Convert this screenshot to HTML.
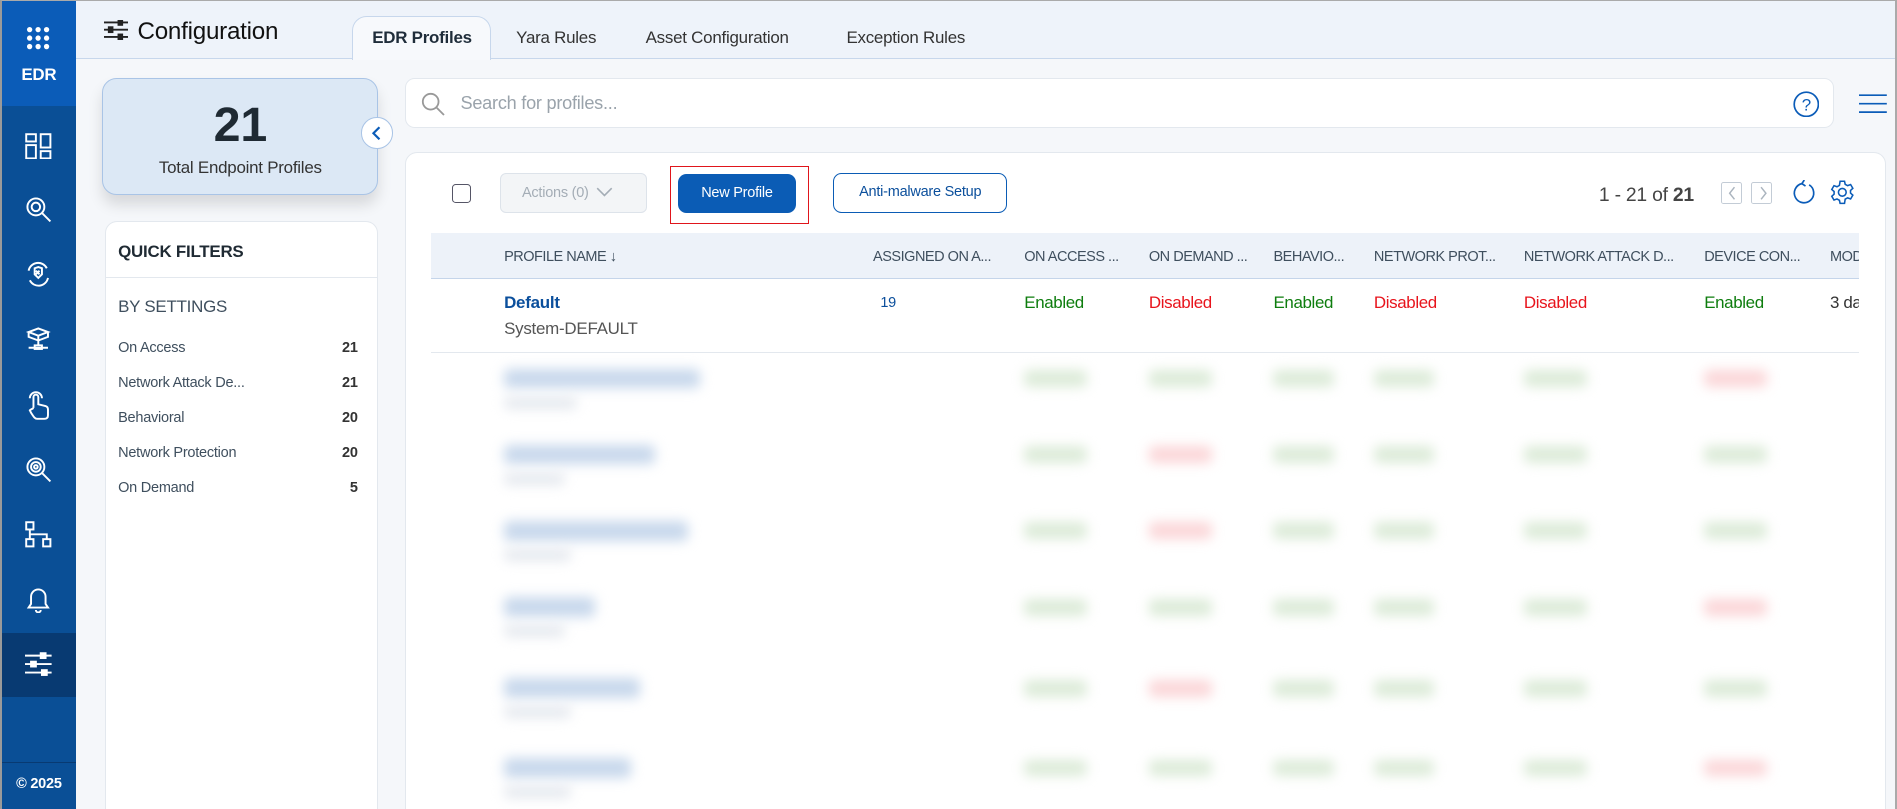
<!DOCTYPE html>
<html><head><meta charset="utf-8"><style>
*{box-sizing:border-box;margin:0;padding:0}
html,body{width:1897px;height:809px;overflow:hidden;background:#f5f7fa}
body{font-family:"Liberation Sans",sans-serif;letter-spacing:-0.2px}
#w{zoom:1.2098;width:1568px;height:669px;position:relative;overflow:hidden;background:#f5f7fa;border-left:2px solid #9a9a9a;border-top:1px solid #aaa;border-right:2px solid #aaa}
.a{position:absolute}
.side{left:0;top:0;width:61px;height:669px;background:#0a4f96}
.side svg{position:absolute;left:19px}
.t{color:#222;font-size:14px}
.blob{position:absolute;filter:blur(5px);border-radius:4px}
.hd{position:absolute;top:205px;font-size:12px;color:#3f4f5e;white-space:nowrap;letter-spacing:-0.4px}
.v{position:absolute;top:241px;font-size:14px;letter-spacing:-0.3px}
.g{color:#0e7d0e}.r{color:#e8141c}
.fi{position:absolute;left:11px;font-size:12px;color:#3f4f5e;width:198px}
.fi b{position:absolute;right:0;color:#333}
</style></head><body><div id="w">
<div class="a side">
 <div class="a" style="left:0;top:0;width:61px;height:87px;background:#0b5cb8"></div>
 <svg style="top:21px;left:20px" width="20" height="20" viewBox="0 0 20 20" fill="#fff"><circle cx="3" cy="3" r="2.2"/><circle cx="10" cy="3" r="2.2"/><circle cx="17" cy="3" r="2.2"/><circle cx="3" cy="10" r="2.2"/><circle cx="10" cy="10" r="2.2"/><circle cx="17" cy="10" r="2.2"/><circle cx="3" cy="17" r="2.2"/><circle cx="10" cy="17" r="2.2"/><circle cx="17" cy="17" r="2.2"/></svg>
 <div class="a" style="top:53px;width:61px;text-align:center;color:#fff;font-weight:bold;font-size:14px">EDR</div>
 <svg style="top:109px" width="22" height="22" viewBox="0 0 22 22" fill="none" stroke="#fff" stroke-width="1.6"><rect x="1" y="1" width="8" height="6"/><rect x="1" y="10" width="8" height="11"/><rect x="13" y="1" width="8" height="11"/><rect x="13" y="15" width="8" height="6"/></svg>
 <svg style="top:161px" width="22" height="22" viewBox="0 0 22 22" fill="none" stroke="#fff" stroke-width="1.6"><circle cx="9" cy="9" r="7"/><circle cx="9" cy="9" r="3.5"/><path d="M14 14l7 7"/></svg>
 <svg style="top:215px" width="22" height="22" viewBox="0 0 22 22" fill="none" stroke="#fff" stroke-width="1.6"><path d="M3 8a8 8 0 0 1 15-2M19 14a8 8 0 0 1-15 2"/><path d="M8 6l3-1 3 1v5l-3 3-3-3z"/><path d="M9 8l3 3M12 8l-3 3"/></svg>
 <svg style="top:269px" width="22" height="22" viewBox="0 0 22 22" fill="none" stroke="#fff" stroke-width="1.6"><path d="M11 2l8 3-8 3-8-3z M3 5v4l8 3 8-3V5M11 8v4M11 12v4M3 18h16"/><rect x="8" y="16" width="6" height="3"/></svg>
 <svg style="top:322px" width="22" height="24" viewBox="0 0 22 24" fill="none" stroke="#fff" stroke-width="1.6"><path d="M7 14V5a2 2 0 0 1 4 0v6l6 1.5c2 .5 2 2 2 3V20c0 2-1 3-3 3H10c-2 0-3-2-5-5l-1-2c1-1 2-1 3-2"/><path d="M4 6a5 5 0 0 1 10 0"/></svg>
 <svg style="top:376px" width="22" height="22" viewBox="0 0 22 22" fill="none" stroke="#fff" stroke-width="1.6"><circle cx="9" cy="9" r="7"/><circle cx="9" cy="9" r="4"/><circle cx="9" cy="9" r="1.5"/><path d="M14 14l7 7"/></svg>
 <svg style="top:430px" width="22" height="22" viewBox="0 0 22 22" fill="none" stroke="#fff" stroke-width="1.6"><rect x="1" y="1" width="6" height="6"/><rect x="1" y="15" width="6" height="6"/><rect x="15" y="15" width="6" height="6"/><path d="M4 7v8M4 11h14v4"/></svg>
 <svg style="top:484px" width="22" height="22" viewBox="0 0 22 22" fill="none" stroke="#fff" stroke-width="1.6"><path d="M11 2a6 6 0 0 1 6 6v6l2 3H3l2-3V8a6 6 0 0 1 6-6z"/><path d="M9 19a2 2 0 0 0 4 0"/></svg>
 <div class="a" style="top:522px;left:0;width:61px;height:53px;background:#083a72"></div>
 <svg style="top:538px" width="22" height="20" viewBox="0 0 22 20" stroke="#fff" stroke-width="1.6" fill="#fff"><path d="M0 3h22M0 10h22M0 17h22"/><rect x="13" y="1" width="4" height="4"/><rect x="5" y="8" width="4" height="4"/><rect x="14" y="15" width="4" height="4"/></svg>
 <div class="a" style="top:629px;left:0;width:61px;border-top:1px solid #083a72"></div>
 <div class="a" style="top:641px;width:61px;text-align:center;color:#fff;font-weight:bold;font-size:12px">© 2025</div>
</div>
<div class="a" style="left:61px;top:0;width:1507px;height:48px;background:#eef3fa;border-bottom:1px solid #c7d7ec"></div>
<svg class="a" style="left:84px;top:16px" width="20" height="16" viewBox="0 0 20 16" stroke="#222" stroke-width="1.6" fill="#222"><path d="M0 2h20M0 8h20M0 14h20"/><rect x="12" y="0" width="3" height="4"/><rect x="4" y="6" width="3" height="4"/><rect x="12" y="12" width="3" height="4"/></svg>
<div class="a" style="left:112px;top:14px;font-size:20px;color:#111;font-weight:500">Configuration</div>
<div class="a" style="left:289px;top:12px;width:115px;height:37px;background:#f7f9fc;border:1px solid #c7d7ec;border-bottom:none;border-radius:12px 12px 0 0"></div>
<div class="a t" style="left:306px;top:22px;font-weight:bold;color:#1f2d3a">EDR Profiles</div>
<div class="a t" style="left:425px;top:22px;color:#333">Yara Rules</div>
<div class="a t" style="left:532px;top:22px;color:#333">Asset Configuration</div>
<div class="a t" style="left:698px;top:22px;color:#333">Exception Rules</div>

<div class="a" style="left:83px;top:64px;width:228px;height:96px;background:#dce8f5;border:1px solid #a9c4e6;border-radius:12px;box-shadow:0 8px 12px rgba(0,0,0,.12)"></div>
<div class="a" style="left:83px;top:79px;width:228px;text-align:center;font-size:40px;font-weight:bold;color:#1f2a33">21</div>
<div class="a" style="left:83px;top:130px;width:228px;text-align:center;font-size:14px;color:#333">Total Endpoint Profiles</div>
<div class="a" style="left:297px;top:96px;width:26px;height:26px;border-radius:50%;background:#fff;border:1px solid #a9c4e6"></div>
<svg class="a" style="left:305px;top:103px" width="10" height="12" viewBox="0 0 10 12" fill="none" stroke="#0b5cb8" stroke-width="1.8"><path d="M7 1L2 6l5 5"/></svg>

<div class="a" style="left:85px;top:182px;width:226px;height:500px;background:#fff;border:1px solid #e3e8ee;border-radius:10px"></div>
<div class="a" style="left:96px;top:199px;font-size:14px;font-weight:bold;color:#1f2a33">QUICK FILTERS</div>
<div class="a" style="left:85px;top:228px;width:226px;border-top:1px solid #e3e8ee"></div>
<div class="a" style="left:96px;top:245px;font-size:14px;color:#3f4f5e;font-weight:500">BY SETTINGS</div>
<div class="a" style="left:85px;top:0"><div class="fi" style="top:280px">On Access<b>21</b></div><div class="fi" style="top:309px">Network Attack De...<b>21</b></div><div class="fi" style="top:338px">Behavioral<b>20</b></div><div class="fi" style="top:367px">Network Protection<b>20</b></div><div class="fi" style="top:396px">On Demand<b>5</b></div></div>

<div class="a" style="left:333px;top:64px;width:1181px;height:41px;background:#fff;border:1px solid #e3e8ee;border-radius:8px"></div>
<svg class="a" style="left:346px;top:75px" width="20" height="20" viewBox="0 0 20 20" fill="none" stroke="#999" stroke-width="1.5"><circle cx="8" cy="8" r="6.5"/><path d="M13 13l6 6"/></svg>
<div class="a" style="left:379px;top:76px;font-size:15px;color:#9aa3ab">Search for profiles...</div>
<svg class="a" style="left:1480px;top:74px" width="22" height="22" viewBox="0 0 22 22"><circle cx="11" cy="11" r="10" fill="none" stroke="#0b5cb8" stroke-width="1.4"/><text x="11" y="16" text-anchor="middle" font-size="14" fill="#0b5cb8" font-family="Liberation Sans">?</text></svg>
<svg class="a" style="left:1535px;top:77px" width="23" height="16" viewBox="0 0 23 16" stroke="#0b5cb8" stroke-width="1.4"><path d="M0 1h23M0 8h23M0 15h23"/></svg>

<div class="a" style="left:333px;top:125px;width:1224px;height:560px;background:#fff;border:1px solid #e3e8ee;border-radius:10px"></div>
<div class="a" style="left:372px;top:151px;width:16px;height:16px;border:1.5px solid #556;border-radius:3px"></div>
<div class="a" style="left:412px;top:142px;width:121px;height:33px;background:#f3f5f7;border:1px solid #dde3ea;border-radius:5px;font-size:12px;color:#a4adb6;padding:9px 0 0 17px">Actions (0) <svg width="14" height="8" viewBox="0 0 14 8" fill="none" stroke="#a4adb6" stroke-width="1.3" style="margin-left:3px"><path d="M1 1l6 6 6-6"/></svg></div>
<div class="a" style="left:552px;top:136px;width:115px;height:48px;border:1.5px solid #e0151b"></div>
<div class="a" style="left:559px;top:143px;width:97px;height:32px;background:#0b5cb5;border-radius:7px;color:#fff;font-size:12px;text-align:center;line-height:32px;font-weight:500">New Profile</div>
<div class="a" style="left:687px;top:142px;width:144px;height:33px;border:1px solid #0b5cb5;border-radius:7px;color:#0b4f9c;font-size:12px;text-align:center;line-height:31px">Anti-malware Setup</div>
<div class="a" style="left:1320px;top:151px;font-size:16px;color:#444">1 - 21 of <b>21</b></div>
<div class="a" style="left:1421px;top:150px;width:17px;height:18px;border:1px solid #c3ccd6;border-radius:2px"></div>
<div class="a" style="left:1446px;top:150px;width:17px;height:18px;border:1px solid #c3ccd6;border-radius:2px"></div>
<svg class="a" style="left:1425px;top:153px" width="40" height="12" viewBox="0 0 40 12" fill="none" stroke="#aab4be" stroke-width="1.2"><path d="M7 1L3 6l4 5M29 1l4 5-4 5"/></svg>
<svg class="a" style="left:1479px;top:148px" width="22" height="22" viewBox="0 0 22 22" fill="none" stroke="#0b5cb8" stroke-width="1.4"><path d="M15 4a8 8 0 1 1-6-1"/><path d="M11 0l-2 3 3 2"/></svg>
<svg class="a" style="left:1510px;top:147px" width="22" height="22" viewBox="0 0 24 24" fill="none" stroke="#0b5cb8" stroke-width="1.4"><circle cx="12" cy="12" r="3.5"/><path d="M10 2h4l.6 2.8 2.2 1.2 2.7-1 2 3.4-2.1 1.9v2.4l2.1 1.9-2 3.4-2.7-1-2.2 1.2L14 22h-4l-.6-2.8-2.2-1.2-2.7 1-2-3.4 2.1-1.9v-2.4L2.5 9.4l2-3.4 2.7 1 2.2-1.2z"/></svg>

<div class="a" style="left:355px;top:192px;width:1180px;height:38px;background:#edf2f9;border-bottom:1px solid #c5d5ea"></div>
<div class="hd" style="left:415px">PROFILE NAME ↓</div>
<div class="hd" style="left:720px">ASSIGNED ON A...</div>
<div class="hd" style="left:845px">ON ACCESS ...</div>
<div class="hd" style="left:948px">ON DEMAND ...</div>
<div class="hd" style="left:1051px">BEHAVIO...</div>
<div class="hd" style="left:1134px">NETWORK PROT...</div>
<div class="hd" style="left:1258px">NETWORK ATTACK D...</div>
<div class="hd" style="left:1407px">DEVICE CON...</div>
<div class="hd" style="left:1511px;width:24px;overflow:hidden">MOD</div>
<div class="a" style="left:415px;top:241px;font-size:14px;font-weight:bold;color:#0b4f9c">Default</div>
<div class="a" style="left:415px;top:263px;font-size:14px;color:#555">System-DEFAULT</div>
<div class="a" style="left:726px;top:243px;font-size:12px;color:#0b4f9c">19</div>
<div class="v g" style="left:845px">Enabled</div><div class="v r" style="left:948px">Disabled</div><div class="v g" style="left:1051px">Enabled</div><div class="v r" style="left:1134px">Disabled</div><div class="v r" style="left:1258px">Disabled</div><div class="v g" style="left:1407px">Enabled</div><div class="v" style="left:1511px;color:#333;width:24px;overflow:hidden;white-space:nowrap">3 da</div>
<div class="a" style="left:355px;top:290px;width:1180px;border-top:1px solid #e3e8ee"></div>

<div class="blob" style="left:415px;top:304px;width:162px;height:16px;background:#c8d8ec"></div><div class="blob" style="left:415px;top:327px;width:60px;height:10px;background:#e4e8ee"></div>
<div class="blob" style="left:845px;top:305px;width:52px;height:14px;background:#dcebd8"></div><div class="blob" style="left:948px;top:305px;width:52px;height:14px;background:#dcebd8"></div><div class="blob" style="left:1051px;top:305px;width:50px;height:14px;background:#dcebd8"></div><div class="blob" style="left:1134px;top:305px;width:50px;height:14px;background:#dcebd8"></div><div class="blob" style="left:1258px;top:305px;width:52px;height:14px;background:#dcebd8"></div><div class="blob" style="left:1407px;top:305px;width:52px;height:14px;background:#fbd6d8"></div>

<div class="blob" style="left:415px;top:367px;width:125px;height:16px;background:#c8d8ec"></div><div class="blob" style="left:415px;top:390px;width:50px;height:10px;background:#e4e8ee"></div>
<div class="blob" style="left:845px;top:368px;width:52px;height:14px;background:#dcebd8"></div><div class="blob" style="left:948px;top:368px;width:52px;height:14px;background:#fbd6d8"></div><div class="blob" style="left:1051px;top:368px;width:50px;height:14px;background:#dcebd8"></div><div class="blob" style="left:1134px;top:368px;width:50px;height:14px;background:#dcebd8"></div><div class="blob" style="left:1258px;top:368px;width:52px;height:14px;background:#dcebd8"></div><div class="blob" style="left:1407px;top:368px;width:52px;height:14px;background:#dcebd8"></div>

<div class="blob" style="left:415px;top:430px;width:152px;height:16px;background:#c8d8ec"></div><div class="blob" style="left:415px;top:453px;width:55px;height:10px;background:#e4e8ee"></div>
<div class="blob" style="left:845px;top:431px;width:52px;height:14px;background:#dcebd8"></div><div class="blob" style="left:948px;top:431px;width:52px;height:14px;background:#fbd6d8"></div><div class="blob" style="left:1051px;top:431px;width:50px;height:14px;background:#dcebd8"></div><div class="blob" style="left:1134px;top:431px;width:50px;height:14px;background:#dcebd8"></div><div class="blob" style="left:1258px;top:431px;width:52px;height:14px;background:#dcebd8"></div><div class="blob" style="left:1407px;top:431px;width:52px;height:14px;background:#dcebd8"></div>

<div class="blob" style="left:415px;top:493px;width:75px;height:16px;background:#c8d8ec"></div><div class="blob" style="left:415px;top:516px;width:50px;height:10px;background:#e4e8ee"></div>
<div class="blob" style="left:845px;top:494px;width:52px;height:14px;background:#dcebd8"></div><div class="blob" style="left:948px;top:494px;width:52px;height:14px;background:#dcebd8"></div><div class="blob" style="left:1051px;top:494px;width:50px;height:14px;background:#dcebd8"></div><div class="blob" style="left:1134px;top:494px;width:50px;height:14px;background:#dcebd8"></div><div class="blob" style="left:1258px;top:494px;width:52px;height:14px;background:#dcebd8"></div><div class="blob" style="left:1407px;top:494px;width:52px;height:14px;background:#fbd6d8"></div>

<div class="blob" style="left:415px;top:560px;width:112px;height:16px;background:#c8d8ec"></div><div class="blob" style="left:415px;top:583px;width:55px;height:10px;background:#e4e8ee"></div>
<div class="blob" style="left:845px;top:561px;width:52px;height:14px;background:#dcebd8"></div><div class="blob" style="left:948px;top:561px;width:52px;height:14px;background:#fbd6d8"></div><div class="blob" style="left:1051px;top:561px;width:50px;height:14px;background:#dcebd8"></div><div class="blob" style="left:1134px;top:561px;width:50px;height:14px;background:#dcebd8"></div><div class="blob" style="left:1258px;top:561px;width:52px;height:14px;background:#dcebd8"></div><div class="blob" style="left:1407px;top:561px;width:52px;height:14px;background:#dcebd8"></div>

<div class="blob" style="left:415px;top:626px;width:105px;height:16px;background:#c8d8ec"></div><div class="blob" style="left:415px;top:649px;width:55px;height:10px;background:#e4e8ee"></div>
<div class="blob" style="left:845px;top:627px;width:52px;height:14px;background:#dcebd8"></div><div class="blob" style="left:948px;top:627px;width:52px;height:14px;background:#dcebd8"></div><div class="blob" style="left:1051px;top:627px;width:50px;height:14px;background:#dcebd8"></div><div class="blob" style="left:1134px;top:627px;width:50px;height:14px;background:#dcebd8"></div><div class="blob" style="left:1258px;top:627px;width:52px;height:14px;background:#dcebd8"></div><div class="blob" style="left:1407px;top:627px;width:52px;height:14px;background:#fbd6d8"></div>
</div></body></html>
